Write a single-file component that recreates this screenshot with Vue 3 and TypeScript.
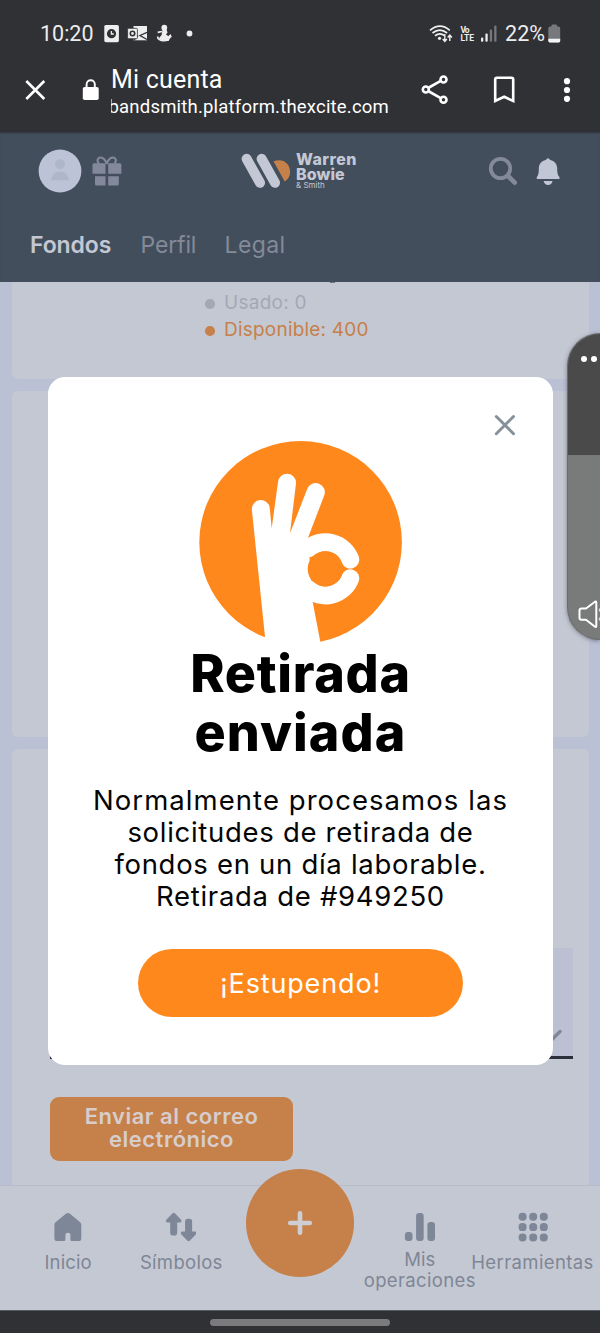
<script setup lang="ts">
import { ref } from 'vue'

interface Line {
  text: string
  cls: string
}

const open = ref(true)

const tabs: Line[] = [
  { text: 'Fondos', cls: 'tab-fondos' },
  { text: 'Perfil', cls: 'tab-perfil' },
  { text: 'Legal', cls: 'tab-legal' },
]

const message: Line[] = [
  { text: 'Normalmente procesamos las', cls: 'wide' },
  { text: 'solicitudes de retirada de', cls: '' },
  { text: 'fondos en un día laborable.', cls: '' },
  { text: 'Retirada de #949250', cls: '' },
]

const gridDots = [0, 1, 2, 3, 4, 5, 6, 7, 8]
</script>

<template>
  <div class="phone">
    <div class="status">
      <span class="clock">10:20</span>
      <svg class="st-icons" width="92" height="20" viewBox="103 23 92 20">
        <rect x="104.3" y="25" width="14.6" height="17.2" rx="1.6" fill="#eeeeef" />
        <circle cx="111.5" cy="33.7" r="4.6" fill="#303135" />
        <path d="M111.4 31v3h2.4" stroke="#eee" stroke-width="1.3" fill="none" />
        <path d="M133.5 26h13.5v14.3h-13.5z" fill="#eeeeef" />
        <path d="M147 32.3l-7 3.200 7 4M138 35.500l-4 4.500" stroke="#303135" stroke-width="1.3" fill="none" />
        <rect x="127.6" y="28.3" width="9.8" height="10.4" rx="1" fill="#eee" stroke="#303135" stroke-width=".8" />
        <circle cx="132.5" cy="33.5" r="2.2" fill="none" stroke="#303135" stroke-width="1.6" />
        <circle cx="164.3" cy="27.7" r="2.9" fill="#eee" />
        <path d="M162.500 30h4.200l.8 2.500-1.500 2 3.500 2.500-.8 4h-7.600l-2-3 2.500-3z" fill="#eee" />
        <path d="M162 31.500l-4.300.8M157.600 36.500c0 5.500 11.800 6 12.600-.6M168.500 37l1.700-1.600.9 2" stroke="#eee" stroke-width="1.7" fill="none" />
        <circle cx="189.5" cy="33.5" r="2.9" fill="#eee" />
      </svg>
      <svg class="st-signal" width="70" height="20" viewBox="429 23 70 20">
        <g fill="none" stroke="#eee" stroke-width="1.7">
          <path d="M430 30.300q10-8.300 19.800 0M432.500 33q7.200-5.800 14.600 0M435 35.700q5-3.600 9.500 0" />
          <path d="M444.800 34v7M442.700 39l2.100 2.400 2.100-2.400M449.800 41v-6M447.700 37.500l2.100-2.400 2.100 2.400" stroke-width="1.4" />
        </g>
        <circle cx="439.5" cy="38.3" r="1.6" fill="#eee" />
        <text x="460.5" y="33" class="volte" textLength="9">Vo</text>
        <text x="460.5" y="41" class="volte" textLength="13.5">LTE</text>
        <rect x="481" y="37.5" width="2.3" height="4.3" rx="1" fill="#eee" />
        <rect x="485.4" y="33.5" width="2.3" height="8.3" rx="1" fill="#eee" />
        <rect x="489.8" y="29.5" width="2.3" height="12.3" rx="1" fill="#77787b" />
        <rect x="494.2" y="25.5" width="2.3" height="16.3" rx="1" fill="#77787b" />
      </svg>
      <span class="pct">22%</span>
      <svg class="st-bat" width="13" height="19" viewBox="0 0 13 19">
        <path d="M3.500 1.500q0-1 1-1h3.500q1 0 1 1v1h1.500q1.700 0 1.700 1.700V17q0 1.400-1.500 1.400H1.800Q.3 18.400.3 17V4.200q0-1.700 1.700-1.700h1.500z" fill="#77787b" />
        <path d="M.3 14.800h11.900V17q0 1.400-1.500 1.400H1.800Q.3 18.400.3 17z" fill="#f3f3f3" />
      </svg>
    </div>

    <div class="browser">
      <svg class="b-close" width="22" height="22" viewBox="24 79 22 22">
        <path d="M26.300 81l18 18M44.300 81l-18 18" stroke="#fff" stroke-width="2.6" fill="none" />
      </svg>
      <svg class="b-lock" width="17" height="22" viewBox="82 78.5 17 22">
        <rect x="82.8" y="86.5" width="15.9" height="13" rx="1.8" fill="#fff" />
        <path d="M86.600 87v-3.200a4.100 4.100 0 0 1 8.200 0V87" stroke="#fff" stroke-width="1.9" fill="none" />
      </svg>
      <div class="b-text">
        <div class="b-title">Mi cuenta</div>
        <div class="b-url"><span>bandsmith.platform.thexcite.com</span></div>
      </div>
      <svg class="b-share" width="28" height="30" viewBox="421 75 28 30">
        <g stroke="#fff" stroke-width="2.6" fill="none">
          <path d="M429 87.500l11.300-6.300M429 91.500l11.300 6.300" />
          <circle cx="425.8" cy="89.5" r="3" /><circle cx="443.5" cy="79.5" r="3" /><circle cx="443.5" cy="99.7" r="3" />
        </g>
      </svg>
      <svg class="b-mark" width="22" height="28" viewBox="493 76 22 28">
        <path d="M495.200 101V79.500q0-1.700 1.700-1.700h14.600q1.700 0 1.700 1.700V101l-9-4.200z" stroke="#fff" stroke-width="2.6" fill="none" />
      </svg>
      <svg class="b-dots" width="8" height="26" viewBox="0 0 8 26">
        <circle cx="4" cy="4.2" r="3.1" fill="#fff" /><circle cx="4" cy="13" r="3.1" fill="#fff" /><circle cx="4" cy="21.8" r="3.1" fill="#fff" />
      </svg>
    </div>

    <header class="header">
      <div class="h-row">
        <svg class="avatar" width="44" height="44" viewBox="37.5 149.5 44 44">
          <circle cx="59.5" cy="171.5" r="21.4" fill="#bdc3d7" />
          <circle cx="59.5" cy="164.7" r="5" fill="#aeb6ca" />
          <path d="M50.500 180.700q1.200-8.700 9-8.700t9 8.700z" fill="#aeb6ca" />
        </svg>
        <svg class="gift" width="30" height="30" viewBox="92.5 156.5 30 30">
          <g fill="#83899a">
            <path d="M94.500 163.800H106v10.400H93v-8.900q0-1.500 1.500-1.500zM108.700 163.800h11.700q1.500 0 1.500 1.500v8.900h-13.200zM95.500 176.800H106v9.200h-9q-1.500 0-1.500-1.500zM108.700 176.800h10.600v7.700q0 1.500-1.500 1.500h-9.100z" />
            <path d="M107.200 164.500c-2-7-7.800-8-9-4.600-.6 2 .5 3.600 1.500 4.400M107.200 164.500c2-7 7.800-8 9-4.600.6 2-.5 3.600-1.500 4.400" fill="none" stroke="#83899a" stroke-width="2" />
          </g>
        </svg>
        <svg class="logo-mark" width="50" height="36" viewBox="241 153 50 36">
          <g stroke="#c4c8d4" stroke-width="10" stroke-linecap="round">
            <path d="M246.600 158.800L260 182.800M261.600 158.800L275 182.800" />
          </g>
          <path d="M273.500 161.300C284 157.300 291 165 290 173.500q-.8 5.500-5.300 8z" fill="#c6804a" />
        </svg>
        <div class="logo-text">
          <div class="l1">Warren</div>
          <div class="l2">Bowie</div>
          <div class="l3">&amp; Smith</div>
        </div>
        <svg class="search" width="30" height="30" viewBox="488 156 30 30">
          <circle cx="500.5" cy="168.5" r="9.7" fill="none" stroke="#838a99" stroke-width="3.8" />
          <path d="M508 176l6.700 6.700" stroke="#838a99" stroke-width="4.6" stroke-linecap="round" />
        </svg>
        <svg class="bell" width="24" height="28" viewBox="536 158 24 28">
          <path d="M545.800 160q2.200-3.600 4.400 0c5 1.200 7 4.500 7 9 0 5 1 6.500 2.300 8v1.900h-22.700V177c1.300-1.500 2-3 2-8 0-4.500 2-7.800 7-9z" fill="#c2c7d5" />
          <path d="M543.700 181h8.800q-.8 4.100-4.400 4.100t-4.400-4.100z" fill="#c2c7d5" />
        </svg>
      </div>
      <nav class="tabs">
        <span v-for="t in tabs" :key="t.text" :class="t.cls">{{ t.text }}</span>
      </nav>
    </header>

    <main class="content">
      <section class="card card-a">
        <i class="tail"></i>
        <div class="legend used"><i></i><span>Usado: 0</span></div>
        <div class="legend avail"><i></i><span>Disponible: 400</span></div>
      </section>
      <section class="card card-b"></section>
      <section class="card card-c">
        <div class="select">
          <svg width="18" height="12" viewBox="0 0 18 12">
            <path d="M2 2.500l7 7 7-7" fill="none" stroke="#7f8798" stroke-width="3.4" stroke-linecap="round" />
          </svg>
        </div>
        <button class="send"><span>Enviar al correo</span><span>electrónico</span></button>
      </section>
    </main>

    <nav class="bottom">
      <div class="item">
        <svg width="28" height="30" viewBox="54.5 1212 28 30">
          <path d="M66.400 1213.800q2-1.500 4 0l10 8.300q1.400 1.200 1.400 3v13.400q0 2.500-2.500 2.500h-7.100q-1.300 0-1.300-1.300v-5.200q0-1.800-2.500-1.800t-2.500 1.800v5.200q0 1.300-1.300 1.300h-7.200q-2.500 0-2.500-2.500v-13.400q0-1.800 1.400-3z" fill="#7e8797" />
        </svg>
        <span class="lb">Inicio</span>
      </div>
      <div class="item">
        <svg width="30" height="30" viewBox="166.5 1212 30 30">
          <g fill="#7e8797">
            <path d="M172.800 1213.500q1.400-1.400 2.800 0l6 6.200q1.300 2.800-1.500 2.800h-2.400v10.200q0 2.800-2.800 2.800h-1.400q-2.800 0-2.800-2.800v-10.200h-2.400q-2.800 0-1.500-2.800z" />
            <path d="M190.500 1240.500q-1.400 1.400-2.800 0l-6-6.200q-1.300-2.800 1.500-2.800h2.400v-10q0-2.800 2.800-2.800h1.400q2.800 0 2.800 2.800v10h2.400q2.800 0 1.500 2.800z" />
          </g>
        </svg>
        <span class="lb lb-sim">Símbolos</span>
      </div>
      <div class="fab">
        <svg width="26" height="26" viewBox="0 0 26 26">
          <path d="M13 3.200v19.600M3.200 13h19.600" stroke="#cdcdd3" stroke-width="4.6" stroke-linecap="round" />
        </svg>
      </div>
      <div class="item">
        <svg width="32" height="30" viewBox="403.5 1212 32 30">
          <g fill="#7e8797">
            <rect x="404.4" y="1232" width="7.6" height="9" rx="3" />
            <rect x="415.6" y="1213" width="7.6" height="28" rx="3" />
            <rect x="426.9" y="1222" width="7.6" height="19" rx="3" />
          </g>
        </svg>
        <span class="lb two"><span>Mis</span><span class="lb-op">operaciones</span></span>
      </div>
      <div class="item">
        <svg width="30" height="30" viewBox="0 0 30 30">
          <rect v-for="n in gridDots" :key="n" :x="0.6 + (n % 3) * 10.6" :y="0.8 + Math.floor(n / 3) * 10.3" width="8" height="8" rx="3.7" fill="#7e8797" />
        </svg>
        <span class="lb lb-her">Herramientas</span>
      </div>
    </nav>
    <div class="homebar"><i></i></div>

    <div v-if="open" class="modal">
      <button class="m-close" aria-label="Cerrar" @click="open = false">
        <svg width="22" height="22" viewBox="0 0 22 22">
          <path d="M2.300 2.500l17.200 17.200M19.500 2.500L2.300 19.700" stroke="#87919a" stroke-width="3" stroke-linecap="round" />
        </svg>
      </button>
      <svg class="hero" width="205" height="206" viewBox="198 440 205 206">
        <circle cx="300.6" cy="542.3" r="101.3" fill="#ff881d" />
        <path fill="#fff" d="M251.800 509A9 9 0 0 1 269.700 507.700L271.700 528.300L278 482.200A9 9 0 0 1 296 483.200L290 533.300L307.300 488.800A9 9 0 0 1 324.200 495.500L308 537.700L312.700 602L321.500 648H266.200L265 636.700Z" />
        <circle cx="325.4" cy="568.9" r="17.6" fill="#ff881d" />
        <path d="M308.500 548.400A26.500 26.500 0 0 1 350.300 559.500M350.300 578.300A26.500 26.500 0 0 1 308.500 589.200" fill="none" stroke="#fff" stroke-width="18" stroke-linecap="round" />
        <circle cx="325.4" cy="568.9" r="17.6" fill="#ff881d" />
      </svg>
      <h1><span class="t1">Retirada</span><span class="t2">enviada</span></h1>
      <p><span v-for="l in message" :key="l.text" :class="l.cls">{{ l.text }}</span></p>
      <button class="ok" @click="open = false">¡Estupendo!</button>
    </div>

    <aside class="pip">
      <div class="pip-top"><i></i><i></i></div>
      <div class="pip-body">
        <svg width="24" height="30" viewBox="576 599 24 30">
          <path d="M581.500 607.500h4.500l9-6.800q1.300-.8 1.300 1v23q0 1.800-1.300 1l-9-7h-4.500q-2 0-2-2v-7.200q0-2 2-2z" fill="none" stroke="#fff" stroke-width="2" stroke-linejoin="round" />
          <path d="M599.500 607.500v3M599.500 616.500v3" stroke="#ddd" stroke-width="1.2" />
        </svg>
      </div>
    </aside>
  </div>
</template>

<style>
body { margin: 0; background: #303135; }
</style>

<style scoped>
.phone { position: relative; width: 600px; height: 1333px; overflow: hidden; display: flex; flex-direction: column; font-family: Inter, "Open Sans", sans-serif; background: #303135; }
.phone svg { display: block; flex: none; }
button { border: 0; padding: 0; margin: 0; font-family: inherit; cursor: pointer; }

.status { height: 66px; flex: none; display: flex; align-items: center; font-family: Roboto, sans-serif; color: #ededee; white-space: nowrap; box-sizing: border-box; padding-left: 40px; }
.clock { width: 63px; font-size: 21.5px; letter-spacing: 0; }
.st-signal { margin-left: 234px; }
.pct { margin-left: 6px; width: 42px; font-size: 21.5px; letter-spacing: .1px; }
.st-bat { margin-left: 1px; }
.volte { font: 700 8.5px Roboto, sans-serif; fill: #eee; }

.browser { height: 66px; flex: none; display: flex; align-items: flex-start; color: #fff; font-family: Roboto, sans-serif; white-space: nowrap; }
.b-close { margin: 13px 0 0 24px; }
.b-lock { margin: 12.5px 0 0 36px; }
.b-text { margin: -1px 0 0 12px; width: 278px; }
.b-title { font-size: 25px; line-height: 30px; letter-spacing: .2px; }
.b-url { display: flex; justify-content: flex-end; overflow: hidden; margin-top: 1px; font-size: 18.5px; line-height: 22px; letter-spacing: .2px; }
.b-share { margin: 9px 0 0 32px; }
.b-mark { margin: 10px 0 0 44px; }
.b-dots { margin: 11px 0 0 48px; }

.header { height: 150px; flex: none; background: #434e5c; display: flex; flex-direction: column; box-shadow: inset 0 2px 2px -1px #30343b; }
.h-row { height: 96px; flex: none; display: flex; align-items: flex-start; }
.avatar { margin: 17px 0 0 37.5px; }
.gift { margin: 24px 0 0 10.5px; }
.logo-mark { margin: 21px 0 0 119px; }
.logo-text { width: 70px; margin: 20px 0 0 5px; color: #c4c8d4; font-weight: 800; font-size: 16px; line-height: 14.5px; white-space: nowrap; }
.l1 { letter-spacing: .45px; }
.l2 { letter-spacing: .1px; }
.l3 { font-size: 8px; line-height: 9px; font-weight: 400; letter-spacing: 0; }
.search { margin: 24px 0 0 122px; }
.bell { margin: 26px 0 0 18px; }
.tabs { display: flex; font-size: 23px; line-height: 34px; color: #838a99; white-space: nowrap; }
.tab-fondos { margin-left: 30px; width: 110.5px; color: #c4c8d4; font-weight: 600; letter-spacing: -.1px; }
.tab-perfil { width: 84px; letter-spacing: -.15px; }
.tab-legal { letter-spacing: .4px; }

.content { height: 903px; flex: none; box-sizing: border-box; padding: 0 11.5px; overflow: hidden; background: #bbc1d4; display: flex; flex-direction: column; gap: 12px; }
.card { flex: none; background: #c4c8d3; border-radius: 6px; box-sizing: border-box; }
.card-a { height: 97px; border-radius: 0 0 6px 6px; overflow: hidden; }
.card-b { height: 346px; }
.card-c { height: 440px; padding: 199px 0 0 38.5px; }
.tail { display: block; width: 5px; height: 1px; margin-left: 318.5px; background: #6d7480; }
.legend { display: flex; align-items: center; height: 27px; margin-left: 193.5px; font-size: 19px; white-space: nowrap; }
.legend i { width: 9.6px; height: 9.6px; border-radius: 50%; margin: 3px 9.5px 0 0; }
.used { margin-top: 6px; color: #a3a8b3; letter-spacing: .25px; }
.used i { background: #a3a8b3; }
.avail { color: #c6804a; letter-spacing: .2px; }
.avail i { background: #c6804a; }
.select { width: 523px; height: 111px; box-sizing: border-box; border-bottom: 3px solid #2b2e3b; background: #bbc1d2; display: flex; justify-content: flex-end; align-items: flex-end; padding: 0 11px 15px 0; }
.send { margin-top: 38px; width: 243px; height: 64px; box-sizing: border-box; border-radius: 9px; background: #c6804a; color: #d6cdcc; font-size: 22px; font-weight: 600; line-height: 22.5px; display: flex; flex-direction: column; align-items: center; justify-content: center; padding-bottom: 2.5px; letter-spacing: .5px; white-space: nowrap; }

.bottom { height: 126px; flex: none; box-sizing: border-box; border-top: 1px solid #b7bcc9; border-bottom: 1px solid #555a64; background: #c4c8d3; display: flex; align-items: flex-start; padding-left: 11.5px; color: #7e8695; font-size: 18.5px; }
.item { width: 113.2px; flex: none; padding-top: 26px; display: flex; flex-direction: column; align-items: center; }
.lb { margin-top: 11px; line-height: 18px; white-space: nowrap; letter-spacing: .1px; }
.lb-sim { letter-spacing: .3px; }
.lb-her { letter-spacing: .4px; margin-left: -5px; margin-right: -4px; }
.two { margin-top: 6.5px; line-height: 21px; display: flex; flex-direction: column; align-items: center; letter-spacing: 0; }
.lb-op { letter-spacing: .36px; }
.fab { flex: none; width: 108px; height: 108px; border-radius: 50%; background: #c6804a; margin: -17px 8.8px 0 8.5px; display: flex; align-items: center; justify-content: center; }

.homebar { height: 22px; flex: none; display: flex; justify-content: center; background: #303135; }
.homebar i { width: 180px; height: 6.5px; margin-top: 8px; border-radius: 4px; background: #7b7b7e; }

/* Dialog floating above the page */
.modal { position: absolute; left: 48px; top: 377px; width: 505px; height: 688px; border-radius: 17px; background: #fff; display: flex; flex-direction: column; align-items: center; color: #050505; }
.m-close { align-self: flex-end; background: none; margin: 37px 37px 0 0; height: 22px; }
.hero { margin-top: 4px; }
h1 { margin: -1px 0 0; font-size: 52px; line-height: 58.5px; font-weight: 800; color: #000; }
h1 span, p span { display: block; text-align: center; white-space: nowrap; }
.t1 { letter-spacing: .7px; }
.t2 { letter-spacing: 1.1px; }
p { margin: 22px 0 0; font-size: 27.5px; line-height: 32px; letter-spacing: .7px; }
p .wide { letter-spacing: 1.06px; }
.ok { margin-top: 37px; width: 325px; height: 68px; border-radius: 34px; background: #ff881d; color: #fff; font-size: 27px; letter-spacing: .85px; }

/* Picture-in-picture player docked on the right edge */
.pip { position: absolute; right: 0; top: 333px; width: 33px; height: 307px; box-sizing: border-box; border-radius: 33px 0 0 33px; overflow: hidden; background: #797a7a; border: 1px solid #6b6c6e; border-right: 0; box-shadow: 0 1px 4px rgba(50, 54, 66, .5); display: flex; flex-direction: column; }
.pip-top { height: 121px; flex: none; box-sizing: border-box; background: #4a4a4b; display: flex; gap: 4.2px; padding: 22px 0 0 12.5px; }
.pip-top i { flex: none; width: 6.2px; height: 6.2px; border-radius: 50%; background: #fff; }
.pip-body { flex: 1; display: flex; align-items: flex-end; padding: 0 0 9.5px 8px; }
</style>
